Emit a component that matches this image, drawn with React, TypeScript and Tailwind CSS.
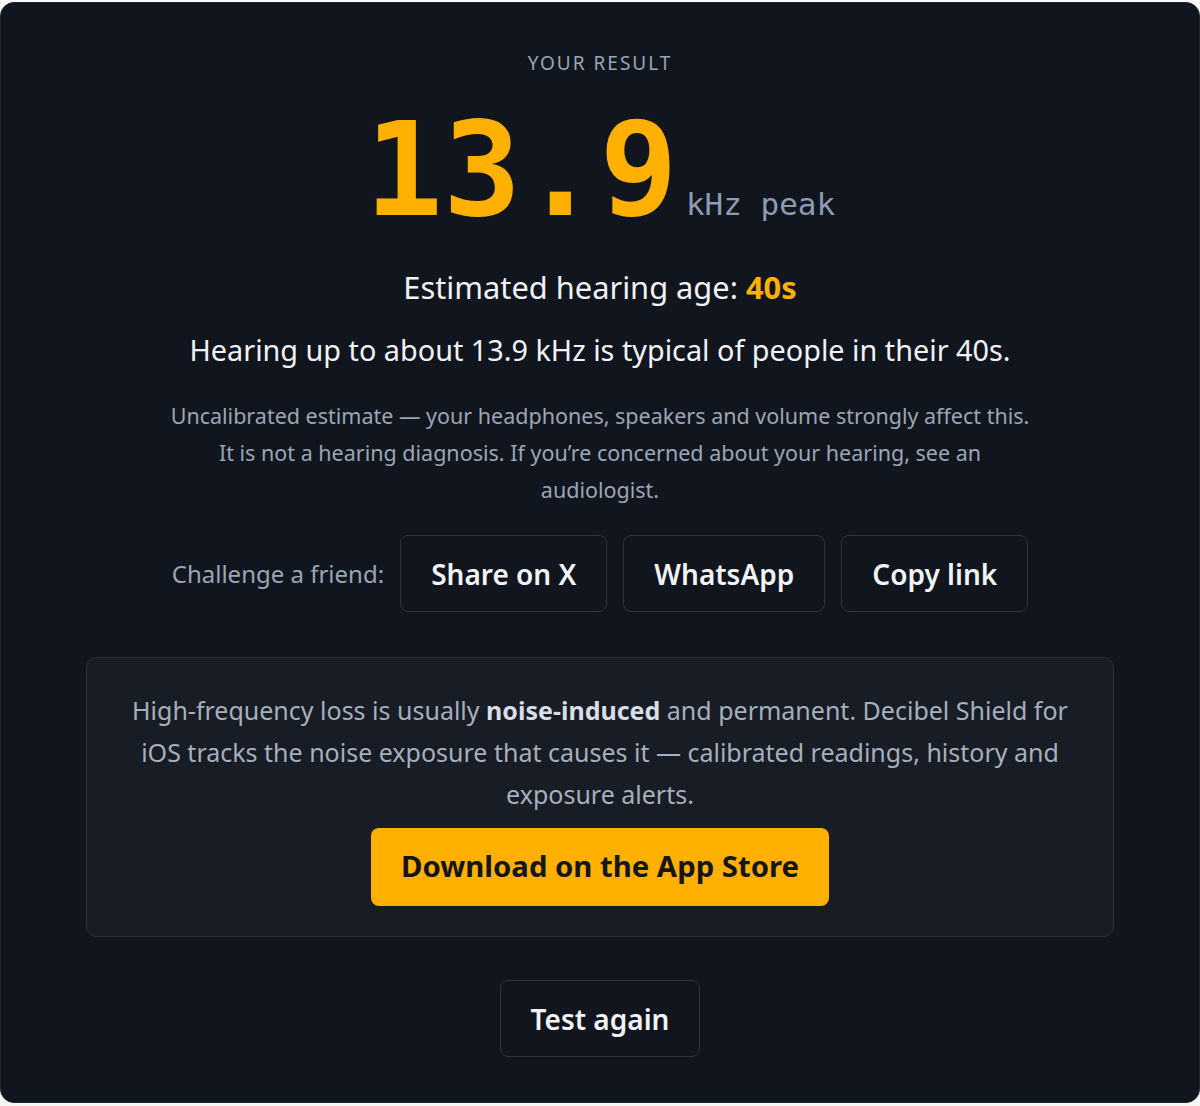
export default function App() {
  return (
    <div className="min-h-screen bg-[#f6f6f3] pt-[2px] pb-[4px] font-['Noto_Sans',sans-serif]">
      <div className="flex flex-col items-center rounded-[14px] border border-[#232834] bg-[#11151d] px-[85px] pt-[48px] pb-[45px] text-center">
        {/* heading + score */}
        <div className="text-[19px] leading-[24px] tracking-[2px] text-[#9aa6b6]">YOUR RESULT</div>
        <div className="mt-[35px] flex items-baseline font-['DejaVu_Sans_Mono',monospace]">
          <span className="text-[130px] leading-[120px] font-bold text-[#ffb000]">13.9</span>
          <span className="ml-[8px] text-[31px] text-[#8c9bb1]">kHz peak</span>
        </div>

        <p className="mt-[37px] text-[30.8px] leading-[40px] text-[#f1f3f6]">
          Estimated hearing age: <span className="font-bold text-[#ffb000]">40s</span>
        </p>
        <p className="mt-[23px] text-[28.8px] leading-[40px] text-[#f1f3f6]">
          Hearing up to about 13.9 kHz is typical of people in their 40s.
        </p>
        <p className="mt-[27px] max-w-[870px] text-[21.5px] leading-[37px] text-[#9aa6b6]">
          Uncalibrated estimate — your headphones, speakers and volume strongly affect this. It is not a hearing
          diagnosis. If you’re concerned about your hearing, see an audiologist.
        </p>

        {/* share row */}
        <div className="mt-[27px] flex items-center gap-[16px]">
          <span className="text-[24px] text-[#9aa6b6]">Challenge a friend:</span>
          {["Share on X", "WhatsApp", "Copy link"].map((label) => (
            <button
              key={label}
              className="h-[77px] rounded-[8px] border border-[#2d3340] px-[30px] text-[28px] font-semibold text-[#f1f3f6]"
            >
              {label}
            </button>
          ))}
        </div>

        {/* promo */}
        <div className="mt-[45px] flex w-full flex-col items-center rounded-[10px] border border-[#2b303b] bg-[#181c25] px-[40px] pt-[31px] pb-[30px]">
          <p className="text-[25px] leading-[42px] text-[#a5afbd]">
            High-frequency loss is usually <b className="font-bold text-[#d9dee6]">noise-induced</b> and permanent.
            Decibel Shield for iOS tracks the noise exposure that causes it — calibrated readings, history and
            exposure alerts.
          </p>
          <button className="mt-[13px] h-[78px] rounded-[8px] bg-[#ffb000] px-[30px] text-[29.3px] font-bold text-[#14161b]">
            Download on the App Store
          </button>
        </div>

        <button className="mt-[43px] h-[77px] rounded-[8px] border border-[#2d3340] px-[30px] text-[28px] font-semibold text-[#f1f3f6]">
          Test again
        </button>
      </div>
    </div>
  );
}
